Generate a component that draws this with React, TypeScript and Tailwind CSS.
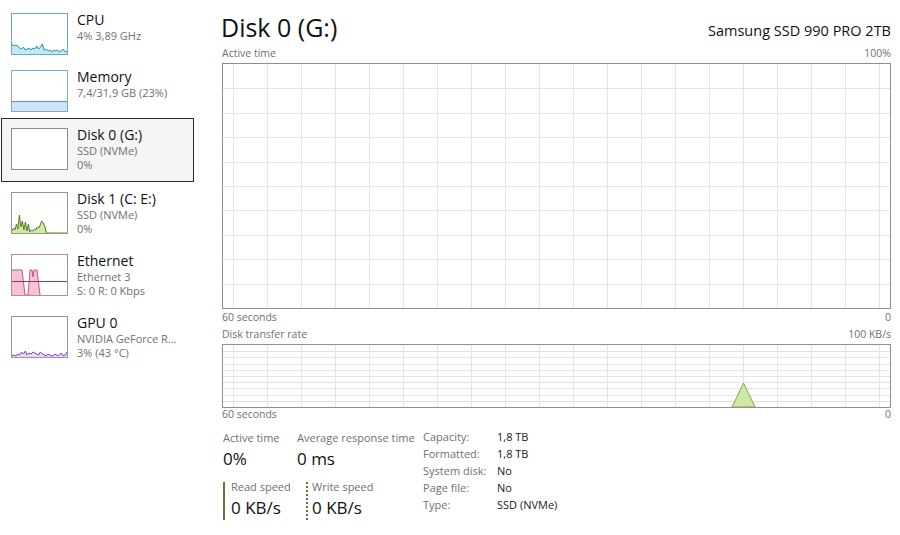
import React from "react";

const FONT = "font-['Segoe_UI','Open_Sans',sans-serif]";

function Thumb({ border, children }: { border: string; children?: React.ReactNode }) {
  return (
    <div className={`w-[57px] h-[42px] bg-white border ${border} shrink-0 relative overflow-hidden`}>
      <svg width="55" height="40" viewBox="0 0 55 40" className="block">
        {children}
      </svg>
    </div>
  );
}

function areaPath(vals: number[], w: number, h: number) {
  const step = w / (vals.length - 1);
  const pts = vals.map((v, i) => `${(i * step).toFixed(1)},${(h - v).toFixed(1)}`);
  const line = "M" + pts.join(" L");
  const area = `M0,${h} L` + pts.join(" L") + ` L${w},${h} Z`;
  return { line, area };
}

const cpu = areaPath([10, 8, 9, 8, 6, 5, 7, 4, 5, 6, 4, 6, 5, 8, 5, 7, 10, 4, 5, 3, 4, 2, 4, 3, 4, 2, 3, 5, 2, 3], 55, 40);
const disk1 = areaPath([2, 5, 3, 9, 4, 18, 6, 12, 3, 11, 2, 9, 1, 3, 2, 4, 3, 6, 5, 8, 12, 10, 7, 1, 0, 0, 0, 0, 0, 0, 0, 0, 0, 0, 0, 0, 0, 0], 55, 40);
const gpu = areaPath([1, 2, 1, 3, 2, 5, 3, 6, 2, 4, 3, 5, 4, 3, 2, 5, 3, 2, 1, 3, 2, 1, 2, 3, 1, 2, 4, 1, 2, 5], 55, 40);

function SideItem({
  title,
  sub1,
  sub2,
  thumb,
  selected,
  h,
}: {
  title: string;
  sub1: string;
  sub2?: string;
  thumb: React.ReactNode;
  selected?: boolean;
  h: string;
}) {
  return (
    <div
      className={`ml-[1px] w-[193px] ${h} border ${
        selected ? "border-[#2b2b2b] bg-[#f5f5f5]" : "border-transparent"
      } flex pt-[9px] pl-[9px]`}
    >
      {thumb}
      <div className="ml-[9px] -mt-[2px] flex flex-col">
        <div className="text-[14px] leading-[18px] text-[#111]">{title}</div>
        <div className="text-[11px] leading-[14px] text-[#707070]">{sub1}</div>
        {sub2 && <div className="text-[11px] leading-[14px] text-[#707070]">{sub2}</div>}
      </div>
    </div>
  );
}

function Grid({ w, h, rows }: { w: number; h: number; rows: number }) {
  const vs: number[] = [];
  for (let x = 10; x < w; x += 34) vs.push(x);
  const hs: number[] = [];
  for (let i = 1; i < rows; i++) hs.push(Math.round((h / rows) * i) + 0.5);
  return (
    <>
      {vs.map((x) => (
        <line key={"v" + x} x1={x + 0.5} y1={0} x2={x + 0.5} y2={h} stroke="#e4e4e4" strokeWidth="1" />
      ))}
      {hs.map((y) => (
        <line key={"h" + y} x1={0} y1={y} x2={w} y2={y} stroke="#e4e4e4" strokeWidth="1" />
      ))}
    </>
  );
}

function InfoRow({ k, v }: { k: string; v: string }) {
  return (
    <div className="flex h-[17px] items-center text-[11px]">
      <div className="w-[74px] text-[#707070]">{k}</div>
      <div className="text-[#1a1a1a]">{v}</div>
    </div>
  );
}

export default function App() {
  return (
    <div className={`w-[900px] h-[535px] bg-white flex overflow-hidden ${FONT}`}>
      <div className="w-[210px] pt-[3px] flex flex-col shrink-0">
        <SideItem
          h="h-[57px]"
          title="CPU"
          sub1="4% 3,89 GHz"
          thumb={
            <Thumb border="border-[#6aaac8]">
              <path d={cpu.area} fill="#c2e8f2" />
              <path d={cpu.line} fill="none" stroke="#2e8aa8" strokeWidth="1" />
            </Thumb>
          }
        />
        <SideItem
          h="h-[58px]"
          title="Memory"
          sub1="7,4/31,9 GB (23%)"
          thumb={
            <Thumb border="border-[#7fa9cc]">
              <rect x="0" y="30" width="55" height="10" fill="#cce3f6" />
              <line x1="0" y1="30.5" x2="55" y2="30.5" stroke="#5e93c2" strokeWidth="1" />
            </Thumb>
          }
        />
        <SideItem
          h="h-[64px]"
          selected
          title="Disk 0 (G:)"
          sub1="SSD (NVMe)"
          sub2="0%"
          thumb={<Thumb border="border-[#8c8c8c]" />}
        />
        <SideItem
          h="h-[62px]"
          title="Disk 1 (C: E:)"
          sub1="SSD (NVMe)"
          sub2="0%"
          thumb={
            <Thumb border="border-[#8f9f86]">
              <path d={disk1.area} fill="#cfe8a8" />
              <path d={disk1.line} fill="none" stroke="#4f7d1f" strokeWidth="1" />
            </Thumb>
          }
        />
        <SideItem
          h="h-[62px]"
          title="Ethernet"
          sub1="Ethernet 3"
          sub2="S: 0 R: 0 Kbps"
          thumb={
            <Thumb border="border-[#b98a9a]">
              <path
                d="M0,40 L0,15 L10,15 L13,40 L16,40 L18,15 L20,15 L21,22 L22,15 L25,15 L28,40 Z"
                fill="#f5c3d3"
              />
              <path
                d="M0,15 L10,15 L13,40 L16,40 L18,15 L20,15 L21,22 L22,15 L25,15 L28,40"
                fill="none"
                stroke="#c15a80"
                strokeWidth="1"
              />
              <line x1="0" y1="26.5" x2="55" y2="26.5" stroke="#a0305a" strokeWidth="1" />
            </Thumb>
          }
        />
        <SideItem
          h="h-[62px]"
          title="GPU 0"
          sub1="NVIDIA GeForce R..."
          sub2="3% (43 °C)"
          thumb={
            <Thumb border="border-[#9a94a6]">
              <path d={gpu.area} fill="#e6d9f5" />
              <path d={gpu.line} fill="none" stroke="#7a3fc4" strokeWidth="1" />
            </Thumb>
          }
        />
      </div>

      <div className="w-[669px] ml-[12px] flex flex-col">
        <div className="h-[44px] flex items-end justify-between">
          <div className="text-[25px] leading-[30px] text-[#111] -ml-[1px] mb-[2px]">Disk 0 (G:)</div>
          <div className="text-[14.5px] leading-[18px] text-[#111] mb-[4px]">Samsung SSD 990 PRO 2TB</div>
        </div>
        <div className="h-[19px] flex justify-between items-center text-[10.5px] text-[#707070]">
          <span>Active time</span>
          <span>100%</span>
        </div>
        <div className="w-[669px] h-[246px] border border-[#8f8f8f] bg-white">
          <svg width="667" height="244" className="block">
            <Grid w={667} h={244} rows={10} />
          </svg>
        </div>
        <div className="h-[17px] flex justify-between items-center text-[10.5px] text-[#707070]">
          <span>60 seconds</span>
          <span>0</span>
        </div>
        <div className="h-[18px] flex justify-between items-center text-[10.5px] text-[#707070]">
          <span>Disk transfer rate</span>
          <span>100 KB/s</span>
        </div>
        <div className="w-[669px] h-[64px] border border-[#8f8f8f] bg-white">
          <svg width="667" height="62" className="block">
            <Grid w={667} h={62} rows={10} />
            <path d="M509,62 L520.5,38 L532,62 Z" fill="#cfe8a8" stroke="#7da653" strokeWidth="1" />
          </svg>
        </div>
        <div className="h-[14px] flex justify-between items-center text-[10.5px] text-[#707070]">
          <span>60 seconds</span>
          <span>0</span>
        </div>

        <div className="mt-[8px] flex">
          <div className="flex flex-col">
            <div className="flex">
              <div className="w-[75px] pl-[1px]">
                <div className="text-[11px] leading-[16px] text-[#707070]">Active time</div>
                <div className="text-[17px] leading-[26px] text-[#111]">0%</div>
              </div>
              <div className="w-[125px]">
                <div className="text-[11px] leading-[16px] text-[#707070]">Average response time</div>
                <div className="text-[17px] leading-[26px] text-[#111]">0 ms</div>
              </div>
            </div>
            <div className="flex mt-[10px]">
              <div className="w-[84px] flex">
                <div className="w-[2px] h-[38px] bg-[#6a7432] ml-[1px]" />
                <div className="ml-[6px] -mt-[2px]">
                  <div className="text-[11px] leading-[14px] text-[#707070]">Read speed</div>
                  <div className="text-[17px] leading-[28px] text-[#111]">0 KB/s</div>
                </div>
              </div>
              <div className="flex">
                <div className="w-[2px] h-[38px] border-l-2 border-dotted border-[#6a7432]" />
                <div className="ml-[4px] -mt-[2px]">
                  <div className="text-[11px] leading-[14px] text-[#707070]">Write speed</div>
                  <div className="text-[17px] leading-[28px] text-[#111]">0 KB/s</div>
                </div>
              </div>
            </div>
          </div>
          <div className="ml-[1px] -mt-[1px] flex flex-col">
            <InfoRow k="Capacity:" v="1,8 TB" />
            <InfoRow k="Formatted:" v="1,8 TB" />
            <InfoRow k="System disk:" v="No" />
            <InfoRow k="Page file:" v="No" />
            <InfoRow k="Type:" v="SSD (NVMe)" />
          </div>
        </div>
      </div>
    </div>
  );
}
